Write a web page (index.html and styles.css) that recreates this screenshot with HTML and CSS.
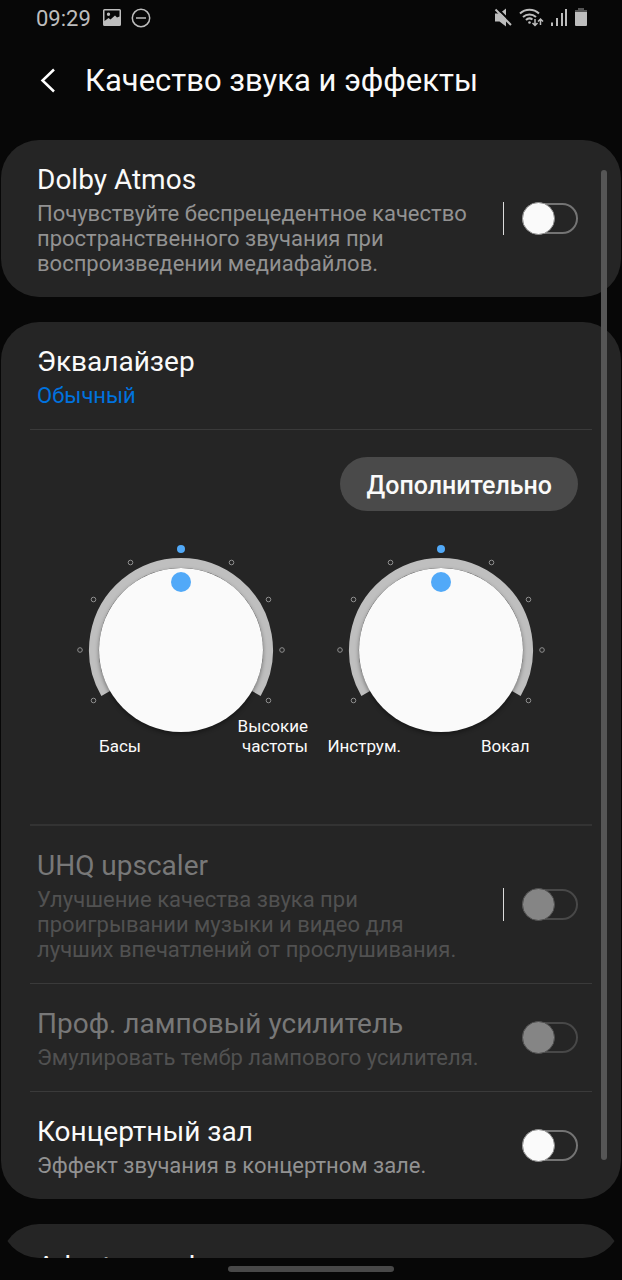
FILE: index.html
```html
<!DOCTYPE html>
<html lang="ru">
  <head>
    <meta charset="UTF-8" />
    <meta name="viewport" content="width=device-width, initial-scale=1.0" />
    <title>Качество звука и эффекты</title>
    <link rel="stylesheet" href="styles.css">
  </head>

  <body>
    <div class="status-bar">
      <span class="clock">09:29</span>
      <svg class="icon-picture" width="18" height="18" viewBox="0 0 18 18">
        <path fill="#bdbdbd" fill-rule="evenodd" d="M1.500 0h15A1.500 1.500 0 0 1 18 1.500v14a1.500 1.500 0 0 1-1.500 1.500h-15A1.500 1.500 0 0 1 0 15.500v-14A1.500 1.500 0 0 1 1.500 0zM1.500 1.500V12l4-3 2 1.500 4.500-4 2 2 2.500-1V1.500zM5.500 3.500a1.700 1.700 0 1 1 0 3.400 1.700 1.700 0 0 1 0-3.400z" />
      </svg>
      <svg class="icon-dnd" width="20" height="20" viewBox="0 0 20 20" fill="none" stroke="#bdbdbd" stroke-width="1.500">
        <circle cx="10" cy="10" r="8.700" />
        <path d="M5 10h10" />
      </svg>
      <div class="status-right">
        <svg width="18" height="20" viewBox="0 0 18 20">
          <path fill="#bdbdbd" d="M1 5.500h4.500L12 .5v18L5.500 13.500H1z" />
          <path stroke="#070707" stroke-width="2" d="M3 0l16 16" />
          <path stroke="#bdbdbd" stroke-width="2" d="M1.500 1.500l15.500 15.500" />
        </svg>
        <svg width="25" height="20" viewBox="0 0 25 20" fill="none" stroke="#bdbdbd" stroke-width="2">
          <path d="M1 5.500a14 14 0 0 1 19 0M4 9a9.500 9.500 0 0 1 13 0M7 12a5 5 0 0 1 6.500-.5" />
          <circle cx="10.500" cy="14.500" r="1.300" fill="#bdbdbd" stroke="none" />
          <path stroke-width="1.500" d="M16 11v6M13.500 15l2.500 2.500 2.500-2.500M21.500 17v-6M19 13.500l2.500-2.500 2.500 2.500" />
        </svg>
        <svg width="17" height="20" viewBox="0 0 17 20" fill="#bdbdbd">
          <path d="M0 14.500h2V18H0zM5 10h2v8H5zM10 5h2v13h-2zM14 1h2v17h-2z" />
        </svg>
        <svg width="12" height="20" viewBox="0 0 12 20">
          <path fill="#555" d="M3 0h6v2h3v3H0V2h3z" />
          <path fill="#bdbdbd" d="M0 4h12v13a1 1 0 0 1-1 1H1a1 1 0 0 1-1-1z" />
        </svg>
      </div>
    </div>

    <header class="header">
      <button class="back" type="button" aria-label="Назад">
        <svg width="16" height="26" viewBox="0 0 16 26" fill="none" stroke="#fff" stroke-width="2.500">
          <path d="M14 1.500L2.500 12.500L14 23.500" />
        </svg>
      </button>
      <h1>Качество звука и эффекты</h1>
    </header>

    <main class="content">
      <section class="card">
        <div class="row">
          <label class="text" for="dolby">
            <span class="name">Dolby Atmos</span>
            <span class="desc">Почувствуйте беспрецедентное качество пространственного звучания при воспроизведении медиафайлов.</span>
          </label>
          <span class="separator"></span>
          <input class="switch" id="dolby" type="checkbox" role="switch">
        </div>
      </section>

      <section class="card">
        <div class="row">
          <div class="text">
            <span class="name">Эквалайзер</span>
            <span class="desc value">Обычный</span>
          </div>
        </div>

        <div class="equalizer">
          <button class="more" type="button">Дополнительно</button>
          <div class="dials">
            <div class="dial">
              <svg class="knob" width="220" height="200" viewBox="-110 -110 220 200">
                <path class="ring" d="M-75.300 43.500A87 87 0 1 1 75.300 43.500" />
                <g class="ticks">
                  <circle cx="-87.500" cy="50.500" r="2.300" />
                  <circle cx="-101" cy="0" r="2.300" />
                  <circle cx="-87.500" cy="-50.500" r="2.300" />
                  <circle cx="-50.500" cy="-87.500" r="2.300" />
                  <circle cx="50.500" cy="-87.500" r="2.300" />
                  <circle cx="87.500" cy="-50.500" r="2.300" />
                  <circle cx="101" cy="0" r="2.300" />
                  <circle cx="87.500" cy="50.500" r="2.300" />
                </g>
                <circle class="cap" r="82" />
                <circle class="mark" cy="-101" r="4" />
                <circle class="mark" cy="-68" r="10" />
              </svg>
              <div class="captions">
                <span class="low">Басы</span>
                <span class="high">Высокие частоты</span>
              </div>
            </div>
            <div class="dial">
              <svg class="knob" width="220" height="200" viewBox="-110 -110 220 200">
                <path class="ring" d="M-75.300 43.500A87 87 0 1 1 75.300 43.500" />
                <g class="ticks">
                  <circle cx="-87.500" cy="50.500" r="2.300" />
                  <circle cx="-101" cy="0" r="2.300" />
                  <circle cx="-87.500" cy="-50.500" r="2.300" />
                  <circle cx="-50.500" cy="-87.500" r="2.300" />
                  <circle cx="50.500" cy="-87.500" r="2.300" />
                  <circle cx="87.500" cy="-50.500" r="2.300" />
                  <circle cx="101" cy="0" r="2.300" />
                  <circle cx="87.500" cy="50.500" r="2.300" />
                </g>
                <circle class="cap" r="82" />
                <circle class="mark" cy="-101" r="4" />
                <circle class="mark" cy="-68" r="10" />
              </svg>
              <div class="captions">
                <span class="low">Инструм.</span>
                <span class="high">Вокал</span>
              </div>
            </div>
          </div>
        </div>

        <div class="row disabled">
          <label class="text" for="uhq">
            <span class="name">UHQ upscaler</span>
            <span class="desc">Улучшение качества звука при проигрывании музыки и видео для лучших впечатлений от прослушивания.</span>
          </label>
          <span class="separator"></span>
          <input class="switch" id="uhq" type="checkbox" role="switch" disabled>
        </div>

        <div class="row disabled">
          <label class="text" for="tube">
            <span class="name">Проф. ламповый усилитель</span>
            <span class="desc">Эмулировать тембр лампового усилителя.</span>
          </label>
          <input class="switch" id="tube" type="checkbox" role="switch" disabled>
        </div>

        <div class="row">
          <label class="text" for="hall">
            <span class="name">Концертный зал</span>
            <span class="desc">Эффект звучания в концертном зале.</span>
          </label>
          <input class="switch" id="hall" type="checkbox" role="switch">
        </div>
      </section>

      <section class="card">
        <div class="row single">
          <div class="text">
            <span class="name">Adapt sound</span>
          </div>
        </div>
      </section>

      <div class="scrollbar"></div>
    </main>

    <div class="nav-bar">
      <div class="handle"></div>
    </div>
  </body>
</html>
```

FILE: styles.css
```css
*,
*::before,
*::after {
  box-sizing: border-box;
}

body {
  display: flex;
  flex-direction: column;
  height: 100vh;
  margin: 0;
  overflow: hidden;
  background-color: #070707;
  color: #fafafa;
  font-family: Roboto, "Noto Sans", sans-serif;
}

button {
  border: none;
  padding: 0;
  color: inherit;
  font-family: inherit;
  cursor: pointer;
}

/* status bar */
.status-bar {
  display: flex;
  align-items: center;
  flex-shrink: 0;
  height: 36px;
  padding: 0 35px 0 36px;
  color: #bdbdbd;
}

.clock {
  font-size: 22px;
}

.icon-picture {
  margin-left: 12px;
}

.icon-dnd {
  margin-left: 10px;
}

.status-right {
  display: flex;
  gap: 7px;
  margin-left: auto;
}

/* header */
.header {
  display: flex;
  align-items: center;
  flex-shrink: 0;
  height: 104px;
  padding: 0 36px 14px 40px;
}

.back {
  display: flex;
  width: 45px;
  background: none;
}

.header h1 {
  margin: 0;
  font-size: 31px;
  font-weight: 400;
  line-height: 38px;
}

/* list of cards */
.content {
  position: relative;
  display: flex;
  flex-direction: column;
  flex: 1;
  gap: 25px;
  min-height: 0;
  margin: 0 1px;
  overflow: hidden;
  border-radius: 0 0 38px 38px;
}

.card {
  flex-shrink: 0;
  border-radius: 38px;
  background-color: #252525;
}

.row {
  display: flex;
  align-items: center;
  padding: 21px 14px 21px 7px;
  margin: 0 29px;
}

.row + * {
  border-top: 1px solid #3a3a3a;
}

.equalizer + .row {
  border-top: 2px solid #333;
}

.single {
  padding-top: 24px;
  padding-bottom: 24px;
}

.text {
  display: flex;
  flex-direction: column;
  flex: 1;
  gap: 2px;
}

.name {
  font-size: 28px;
  line-height: 38px;
}

.desc {
  color: #929292;
  font-size: 22px;
  line-height: 25px;
}

.value {
  color: #0072de;
}

.disabled .name {
  color: #787878;
}

.disabled .desc {
  color: #515151;
}

.separator {
  width: 1px;
  height: 33px;
  margin: 0 18px 0 26px;
  background-color: #dcdcdc;
}

/* switch */
.switch {
  position: relative;
  flex-shrink: 0;
  width: 56px;
  height: 33px;
  margin: 0;
  appearance: none;
}

.switch::before {
  content: "";
  position: absolute;
  inset: 1px 0;
  border: 2px solid #747474;
  border-radius: 16px;
}

.switch::after {
  content: "";
  position: absolute;
  top: 0;
  left: 0;
  width: 33px;
  height: 33px;
  border: 1px solid #8c8c8c;
  border-radius: 50%;
  background-color: #fafafa;
}

.switch:checked::after {
  left: 23px;
}

.switch:disabled::before {
  border-color: #484848;
}

.switch:disabled::after {
  border-color: #505050;
  background-color: #858585;
}

/* equalizer */
.equalizer {
  display: flex;
  flex-direction: column;
  gap: 29px;
  margin: 0 29px;
  padding: 27px 0 67px;
}

.more {
  align-self: flex-end;
  height: 54px;
  margin-right: 14px;
  padding: 2px 26px 0 27px;
  border-radius: 27px;
  background-color: #4a4a4a;
  font-size: 25px;
  font-weight: 500;
}

.dials {
  display: flex;
  justify-content: center;
}

.dial {
  display: flex;
  flex-direction: column;
  align-items: center;
  width: 260px;
}

.ring {
  fill: none;
  stroke: #bfbfbf;
  stroke-width: 10;
}

.ticks {
  fill: none;
  stroke: #8f8f8f;
}

.cap {
  fill: #fafafa;
  filter: drop-shadow(0 2px 2px rgba(0, 0, 0, 0.4));
}

.mark {
  fill: #51a9f8;
}

.captions {
  display: grid;
  grid-template-columns: 1fr 1fr;
  align-items: end;
  column-gap: 80px;
  width: 100%;
  min-height: 41px;
  margin-top: -24px;
  padding-bottom: 1px;
  font-size: 17px;
  line-height: 20px;
}

.low {
  justify-self: end;
}

.high {
  justify-self: start;
  max-width: 87px;
  text-align: right;
}

.scrollbar {
  position: absolute;
  top: 30px;
  right: 14px;
  width: 6px;
  height: 990px;
  border-radius: 3px;
  background-color: #565656;
}

/* gesture bar */
.nav-bar {
  display: flex;
  justify-content: center;
  align-items: center;
  flex-shrink: 0;
  height: 22px;
}

.handle {
  width: 166px;
  height: 6px;
  border-radius: 3px;
  background-color: #484848;
}
```
